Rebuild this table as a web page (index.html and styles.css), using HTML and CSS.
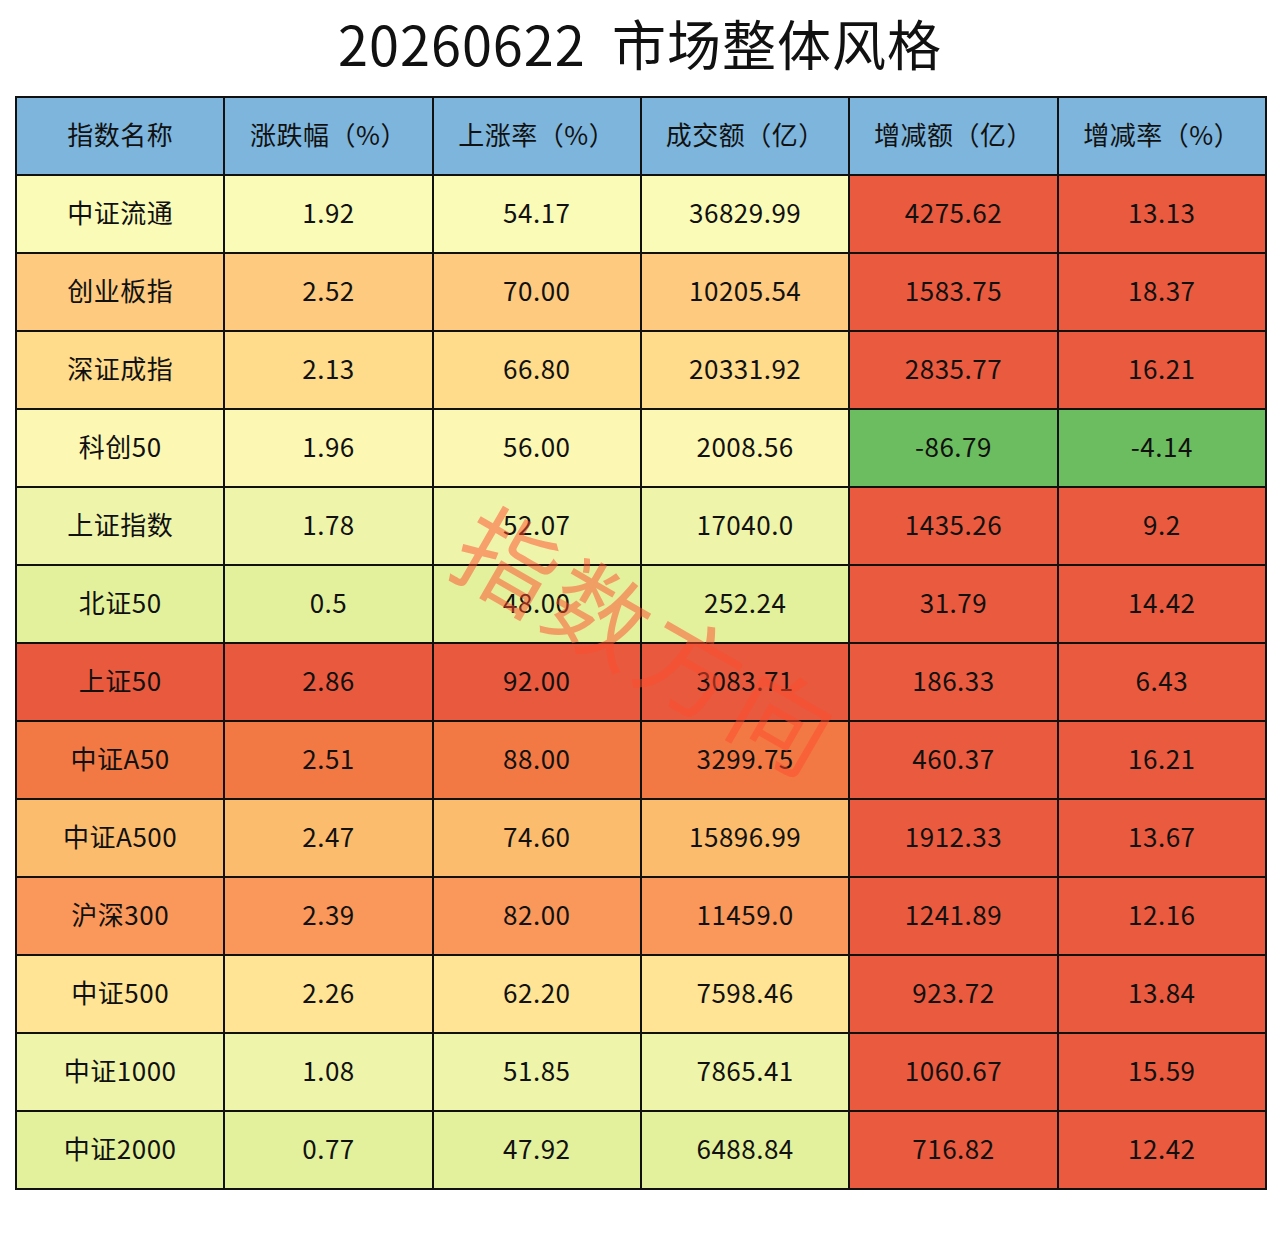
FILE: index.html
```html
<!DOCTYPE html>
<html lang="zh">
<head>
<meta charset="utf-8">
<title>20260622 市场整体风格</title>
<link rel="stylesheet" href="styles.css">
</head>
<body>
<div class="page">
  <h1 class="title">20260622&nbsp;&nbsp;市场整体风格</h1>
  <table class="grid">
    <thead>
      <tr class="head">
        <th>指数名称</th><th>涨跌幅（%）</th><th>上涨率（%）</th><th>成交额（亿）</th><th>增减额（亿）</th><th>增减率（%）</th>
      </tr>
    </thead>
    <tbody>
      <tr class="r-y1"><td>中证流通</td><td>1.92</td><td>54.17</td><td>36829.99</td><td class="up">4275.62</td><td class="up">13.13</td></tr>
      <tr class="r-o1"><td>创业板指</td><td>2.52</td><td>70.00</td><td>10205.54</td><td class="up">1583.75</td><td class="up">18.37</td></tr>
      <tr class="r-o2"><td>深证成指</td><td>2.13</td><td>66.80</td><td>20331.92</td><td class="up">2835.77</td><td class="up">16.21</td></tr>
      <tr class="r-y2"><td>科创50</td><td>1.96</td><td>56.00</td><td>2008.56</td><td class="down">-86.79</td><td class="down">-4.14</td></tr>
      <tr class="r-g1"><td>上证指数</td><td>1.78</td><td>52.07</td><td>17040.0</td><td class="up">1435.26</td><td class="up">9.2</td></tr>
      <tr class="r-g2"><td>北证50</td><td>0.5</td><td>48.00</td><td>252.24</td><td class="up">31.79</td><td class="up">14.42</td></tr>
      <tr class="r-red"><td>上证50</td><td>2.86</td><td>92.00</td><td>3083.71</td><td class="up">186.33</td><td class="up">6.43</td></tr>
      <tr class="r-o3"><td>中证A50</td><td>2.51</td><td>88.00</td><td>3299.75</td><td class="up">460.37</td><td class="up">16.21</td></tr>
      <tr class="r-o4"><td>中证A500</td><td>2.47</td><td>74.60</td><td>15896.99</td><td class="up">1912.33</td><td class="up">13.67</td></tr>
      <tr class="r-o5"><td>沪深300</td><td>2.39</td><td>82.00</td><td>11459.0</td><td class="up">1241.89</td><td class="up">12.16</td></tr>
      <tr class="r-o6"><td>中证500</td><td>2.26</td><td>62.20</td><td>7598.46</td><td class="up">923.72</td><td class="up">13.84</td></tr>
      <tr class="r-g1"><td>中证1000</td><td>1.08</td><td>51.85</td><td>7865.41</td><td class="up">1060.67</td><td class="up">15.59</td></tr>
      <tr class="r-g2"><td>中证2000</td><td>0.77</td><td>47.92</td><td>6488.84</td><td class="up">716.82</td><td class="up">12.42</td></tr>
    </tbody>
  </table>
  <div class="watermark">指数方向</div>
</div>
</body>
</html>
```

FILE: styles.css
```css
html, body {
  margin: 0;
  padding: 0;
  background: #ffffff;
}
body {
  font-family: "Noto Sans CJK SC", "Noto Sans", sans-serif;
  color: #111111;
}
.page {
  position: relative;
  width: 1280px;
  height: 1260px;
}
.title {
  margin: 0;
  height: 96px;
  display: flex;
  align-items: center;
  justify-content: center;
  padding-bottom: 12px;
  box-sizing: border-box;
  font-size: 54px;
  font-weight: 400;
  letter-spacing: 1px;
  color: #111;
}
.grid {
  margin-left: 15px;
  width: 1252px;
  border-collapse: collapse;
  table-layout: fixed;
  border: 2px solid #111;
}
.grid th, .grid td {
  border: 2px solid #111;
  height: 71px;
  padding: 0 0 5px 0;
  text-align: center;
  vertical-align: middle;
  font-size: 26px;
  font-weight: 400;
  letter-spacing: 0.5px;
}
.head th {
  background: #7db5dc;
}
.r-y1 td { background: #fbfbb8; }
.r-o1 td { background: #fdca7f; }
.r-o2 td { background: #fedc8b; }
.r-y2 td { background: #fcf7b3; }
.r-g1 td { background: #eef5ab; }
.r-g2 td { background: #e3f19c; }
.r-red td { background: #e9593d; }
.r-o3 td { background: #f37944; }
.r-o4 td { background: #fcbc6d; }
.r-o5 td { background: #f9985a; }
.r-o6 td { background: #fee494; }
.grid td.up { background: #ea5a3e; }
.grid td.down { background: #6cbd5f; }
.watermark {
  position: absolute;
  left: 420px;
  top: 578px;
  width: 460px;
  line-height: 120px;
  text-align: center;
  font-size: 100px;
  font-weight: 400;
  letter-spacing: 6px;
  color: rgba(255, 75, 45, 0.5);
  transform: rotate(30deg);
  pointer-events: none;
  white-space: nowrap;
}
```
